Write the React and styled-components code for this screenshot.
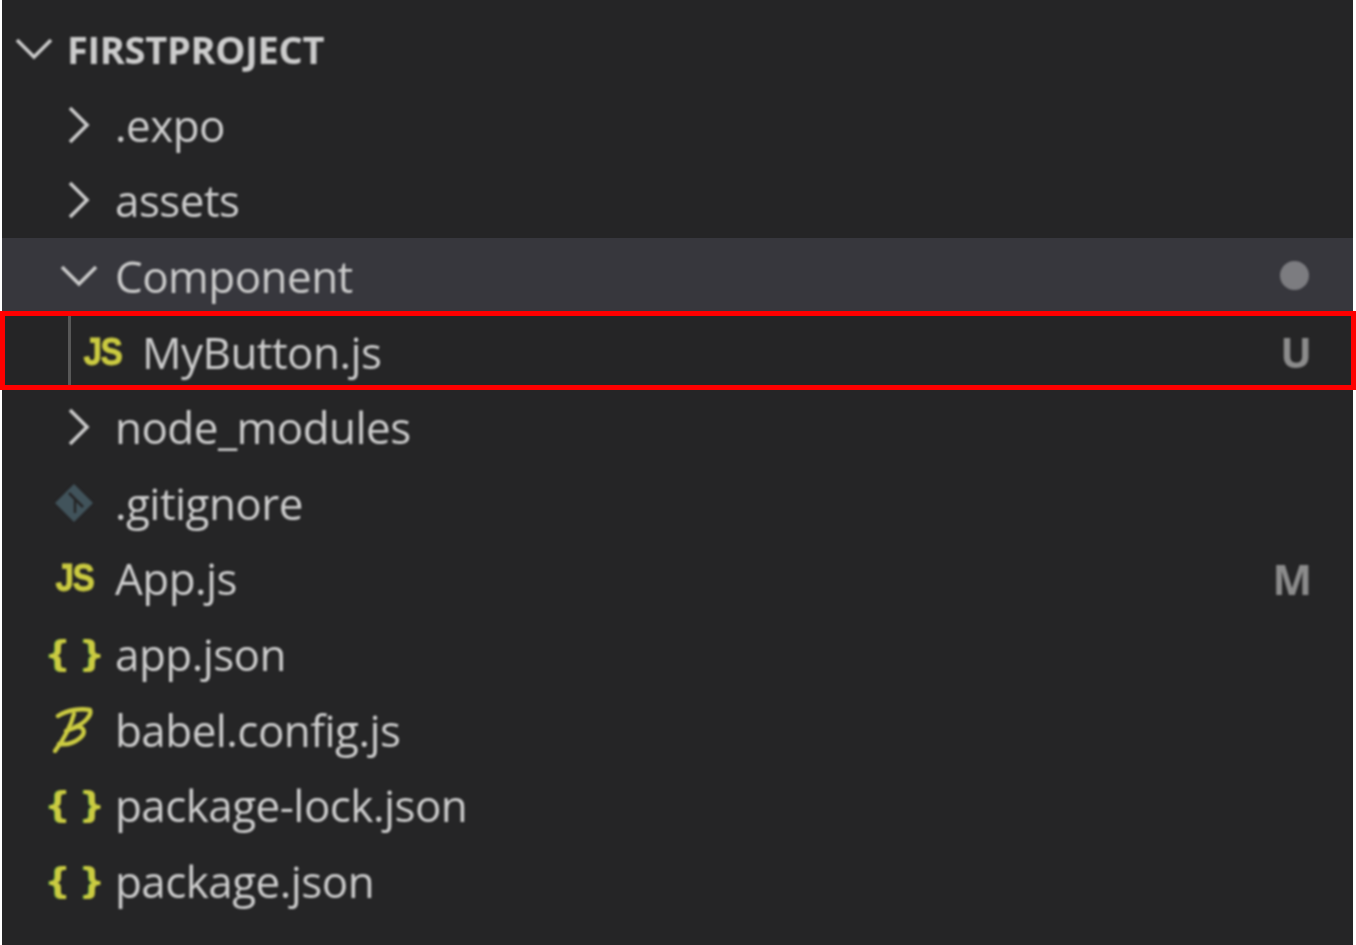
import React from 'react';
import styled, { createGlobalStyle } from 'styled-components';

const GlobalStyle = createGlobalStyle`
  html, body {
    margin: 0;
    padding: 0;
    background: #ffffff;
  }
`;

const Panel = styled.div`
  box-sizing: border-box;
  width: 1351px;
  height: 945px;
  margin-left: 2px;
  padding-top: 10px;
  background: #252526;
  color: #cccccc;
  font-family: "Open Sans", "Noto Sans", sans-serif;
  font-size: 44px;
`;

const Row = styled.div`
  position: relative;
  box-sizing: border-box;
  display: flex;
  align-items: center;
  height: 75.6px;
  padding-left: ${props => props.$indent}px;
  padding-right: 41px;
  background: ${props => (props.$active ? '#37373d' : 'transparent')};
`;

const Header = styled(Row)`
  height: 77px;
`;

const Title = styled.span`
  font-weight: 700;
  font-size: 38px;
  letter-spacing: -0.3px;
  color: #cccccc;
  filter: blur(1px);
`;

const Slot = styled.span`
  display: flex;
  align-items: center;
  justify-content: center;
  flex: none;
  width: 44px;
  margin-right: ${props => props.$gap}px;
  filter: blur(1px);
`;

const Label = styled.span`
  font-weight: 500;
  letter-spacing: -0.55px;
  line-height: 1;
  filter: blur(1px);
`;

const Status = styled.span`
  margin-left: auto;
  font-weight: 700;
  font-size: 42px;
  color: #8c8c8c;
  filter: blur(1px);
`;

const Dot = styled.span`
  margin-left: auto;
  margin-right: 3px;
  width: 29px;
  height: 29px;
  border-radius: 50%;
  background: #7c7c80;
  filter: blur(1px);
`;

const Guide = styled.span`
  position: absolute;
  left: 66px;
  top: 0;
  bottom: 0;
  width: 3px;
  background: #585858;
`;

const Highlight = styled.span`
  position: absolute;
  left: -2px;
  right: -3px;
  top: -3px;
  bottom: -1px;
  border: 5px solid #fe0000;
  pointer-events: none;
`;

const JsGlyph = styled.span`
  font-family: "Liberation Sans", sans-serif;
  font-weight: 700;
  font-size: 38px;
  letter-spacing: -2px;
  line-height: 1;
  color: #cbcb41;
  transform: scaleX(0.88);
  -webkit-text-stroke: 0.8px #cbcb41;
`;

const BraceGlyph = styled.span`
  font-family: "DejaVu Sans", sans-serif;
  font-weight: 700;
  font-size: 36px;
  line-height: 1;
  white-space: nowrap;
  letter-spacing: -2px;
  color: #cbcb41;
  text-shadow: -1px 0 0 #4f9a3a;
`;

const Chevron = ({ open }) => (
  <svg width="38" height="38" viewBox="0 0 38 38" fill="none" stroke="#cccccc" strokeWidth="3.6">
    {open ? <path d="M2 10 L19 27 L36 10" /> : <path d="M10 2 L27 19 L10 36" />}
  </svg>
);

const GitIcon = () => (
  <svg width="40" height="40" viewBox="0 0 40 40">
    <path d="M20 1 L39 20 L20 39 L1 20 Z" fill="#41535b" />
    <path d="M15 10 L29 24 M21 16 L21 30" stroke="#252526" strokeWidth="2.5" fill="none" />
  </svg>
);

const BabelIcon = () => (
  <svg width="42" height="46" viewBox="0 0 42 46" fill="none" stroke="#cbcb41" strokeWidth="4.4" strokeLinejoin="round" strokeLinecap="round">
    <path d="M5 9 C14 3 28 1 37 3 C39 8 32 16 22 20 C32 19 33 26 27 31 C21 36 13 38 6 37" />
    <path d="M21 7 C18 18 11 32 2 44" />
    <path d="M13 24 L24 20" />
  </svg>
);

const items = [
  { name: '.expo', kind: 'closed', indent: 55, gap: 14 },
  { name: 'assets', kind: 'closed', indent: 55, gap: 14 },
  { name: 'Component', kind: 'open', indent: 55, gap: 14, active: true, dot: true },
  { name: 'MyButton.js', kind: 'js', indent: 78, gap: 18, status: 'U', marked: true },
  { name: 'node_modules', kind: 'closed', indent: 55, gap: 14 },
  { name: '.gitignore', kind: 'git', indent: 50, gap: 19 },
  { name: 'App.js', kind: 'js', indent: 50, gap: 19, status: 'M' },
  { name: 'app.json', kind: 'json', indent: 50, gap: 19 },
  { name: 'babel.config.js', kind: 'babel', indent: 50, gap: 19 },
  { name: 'package-lock.json', kind: 'json', indent: 50, gap: 19 },
  { name: 'package.json', kind: 'json', indent: 50, gap: 19 },
];

const renderIcon = kind => {
  switch (kind) {
    case 'closed': return <Chevron />;
    case 'open': return <Chevron open />;
    case 'js': return <JsGlyph>JS</JsGlyph>;
    case 'git': return <GitIcon />;
    case 'babel': return <BabelIcon />;
    default: return <BraceGlyph>{'{ }'}</BraceGlyph>;
  }
};

const App = () => (
  <>
    <GlobalStyle />
    <Panel>
      <Header $indent={10}>
        <Slot $gap={11}><Chevron open /></Slot>
        <Title>FIRSTPROJECT</Title>
      </Header>
      {items.map(item => (
        <Row key={item.name} $indent={item.indent} $active={item.active}>
          {item.marked && <Guide />}
          <Slot $gap={item.gap}>{renderIcon(item.kind)}</Slot>
          <Label>{item.name}</Label>
          {item.dot && <Dot />}
          {item.status && <Status>{item.status}</Status>}
          {item.marked && <Highlight />}
        </Row>
      ))}
    </Panel>
  </>
);

export default App;
